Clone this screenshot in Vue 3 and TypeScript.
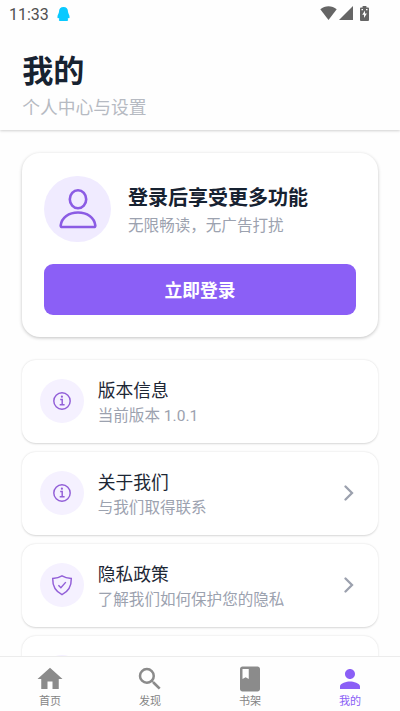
<script setup lang="ts">
interface Entry {
  icon: 'info' | 'shield'
  title: string
  detail: string
  arrow: boolean
}

interface Tab {
  label: string
  path: string
  active: boolean
}

const entries: Entry[] = [
  { icon: 'info', title: '版本信息', detail: '当前版本 1.0.1', arrow: false },
  { icon: 'info', title: '关于我们', detail: '与我们取得联系', arrow: true },
  { icon: 'shield', title: '隐私政策', detail: '了解我们如何保护您的隐私', arrow: true },
  { icon: 'shield', title: '', detail: '', arrow: false },
]

const tabs: Tab[] = [
  { label: '首页', path: 'M10 20v-6h4v6h5v-8h3L12 3 2 12h3v8z', active: false },
  {
    label: '发现',
    path: 'M15.5 14h-.79l-.28-.27A6.47 6.47 0 0 0 16 9.5 6.5 6.5 0 1 0 9.5 16c1.61 0 3.09-.59 4.23-1.57l.27.28v.79l5 4.99L20.49 19zm-6 0a4.5 4.5 0 1 1 0-9 4.5 4.5 0 0 1 0 9',
    active: false,
  },
  {
    label: '书架',
    path: 'M18 2H6c-1.1 0-2 .9-2 2v16c0 1.1.9 2 2 2h12c1.1 0 2-.9 2-2V4c0-1.1-.9-2-2-2M6 4h5v8l-2.5-1.5L6 12z',
    active: false,
  },
  {
    label: '我的',
    path: 'M12 12c2.21 0 4-1.79 4-4s-1.79-4-4-4-4 1.79-4 4 1.79 4 4 4m0 2c-2.67 0-8 1.34-8 4v2h16v-2c0-2.66-5.33-4-8-4',
    active: true,
  },
]
</script>

<template>
  <div class="screen">
    <header class="header">
      <div class="status">
        <span class="clock">11:33</span>
        <svg class="penguin" viewBox="0 0 13 14">
          <path d="M6.500 0C3.600 0 2 2 2 4.800 1.900 6.500.4 7.800.4 10.300c0 1 .7 1.100 1.500.6L2.300 12c-.8.800-.5 2 .7 2h7c1.200 0 1.500-1.200.7-2l.4-1.100c.8.5 1.500.4 1.500-.6C12.600 7.800 11.100 6.500 11 4.800 11 2 9.400 0 6.500 0z" />
        </svg>
        <div class="signals">
          <svg class="wifi" viewBox="0 0 17 14"><path d="M.3 3.2C5-.9 12-.9 16.700 3.200L8.500 14z" /></svg>
          <svg class="cell" viewBox="0 0 14 14"><path d="M14 0v14H0z" /></svg>
          <svg class="battery" viewBox="0 0 9 15">
            <path d="M2.600 0h3.800v1.500H8Q9 1.500 9 2.500V14q0 1-1 1H1q-1 0-1-1V2.500q0-1 1-1h1.600z" />
            <path class="bolt" d="M5 4.500L2.200 8.800h1.800v3.200L6.900 7.600H5zM1.500 3.100h1.500v1.200H1.500zM6 3.100h1.500v1.200H6z" />
          </svg>
        </div>
      </div>
      <h1>我的</h1>
      <p>个人中心与设置</p>
    </header>

    <main class="content">
      <section class="login-card">
        <div class="profile">
          <div class="avatar">
            <svg viewBox="0 0 40 42">
              <ellipse cx="20" cy="11.200" rx="8.200" ry="9" />
              <path d="M4.400 39h31.200q1.700 0 1.700-1.600C36.300 29.600 29.200 24.500 20 24.500S3.700 29.600 2.700 37.400Q2.700 39 4.400 39z" />
            </svg>
          </div>
          <div class="profile-text">
            <h2>登录后享受更多功能</h2>
            <p>无限畅读，无广告打扰</p>
          </div>
        </div>
        <button class="login" type="button">立即登录</button>
      </section>

      <ul class="entries">
        <li v-for="(entry, index) in entries" :key="index" class="entry">
          <div class="entry-icon">
            <svg v-if="entry.icon === 'info'" viewBox="0 0 22 22">
              <circle cx="11" cy="11" r="8.200" />
              <path d="M9.200 9.500h2v5.100M8.700 14.800h4.900" />
              <circle class="dot" cx="10.900" cy="6.700" r="1.100" />
            </svg>
            <svg v-else viewBox="0 0 22 22">
              <path d="M11 1.900C8.500 3.500 5 4.300 1.700 4.500c-.2 8 2.300 12.700 9.300 16.100 7-3.400 9.500-8.100 9.300-16.100C17 4.300 13.500 3.500 11 1.900z" />
              <path d="M7.400 11.300l2.500 2.500 4.900-5.700" />
            </svg>
          </div>
          <div class="entry-text">
            <h3>{{ entry.title }}</h3>
            <p>{{ entry.detail }}</p>
          </div>
          <svg v-if="entry.arrow" class="arrow" viewBox="0 0 10 16"><path d="M1.500 1.500L8 8l-6.500 6.500" /></svg>
        </li>
      </ul>
    </main>

    <nav class="tabs">
      <a v-for="tab in tabs" :key="tab.label" class="tab" :class="{ active: tab.active }">
        <svg viewBox="0 0 24 24"><path :d="tab.path" /></svg>
        <span>{{ tab.label }}</span>
      </a>
    </nav>
  </div>
</template>

<style>
body {
  background: #fefefe;
}
</style>

<style scoped>
.screen {
  display: flex;
  flex-direction: column;
  height: 711px;
  overflow: hidden;
  font-family: Roboto, 'Noto Sans CJK SC', sans-serif;
  background: #fefefe;
}

svg {
  display: block;
  flex: none;
}

h1,
h2,
h3,
p,
ul {
  margin: 0;
  padding: 0;
}

.header {
  flex: none;
  box-sizing: border-box;
  height: 130px;
  background: #fefefe;
  box-shadow: 0 1px 2.500px rgba(0, 0, 0, 0.18);
}

.status {
  display: flex;
  align-items: center;
  height: 28px;
  padding: 0 31px 0 9px;
}

.clock {
  width: 39px;
  padding-top: 1px;
  font-size: 16px;
  font-weight: 400;
  line-height: 28px;
  color: #505050;
}

.penguin {
  width: 13px;
  height: 14px;
  margin-left: 8.500px;
  fill: #09c9ff;
}

.signals {
  display: flex;
  align-items: center;
  margin-left: auto;
  margin-top: -2px;
  fill: #656565;
}

.wifi {
  width: 17px;
  height: 14px;
}

.cell {
  width: 14px;
  height: 14px;
  margin-left: 1.500px;
}

.battery {
  width: 9px;
  height: 15px;
  margin-left: 7.500px;
}

.bolt {
  fill: #fefefe;
}

h1 {
  padding: 22px 22.200px 0;
  font-size: 31.100px;
  font-weight: 700;
  line-height: 43px;
  color: #172231;
}

.header p {
  padding: 2px 22.200px 0;
  font-size: 17.780px;
  line-height: 27px;
  color: #b6bac2;
}

.content {
  flex: 1;
  min-height: 0;
  padding: 23px 22.200px 0;
  overflow: hidden;
}

.login-card {
  box-sizing: border-box;
  height: 184px;
  padding: 22.500px 22.200px;
  border-radius: 18px;
  background: #fff;
  box-shadow: 0 1px 3.500px rgba(0, 0, 0, 0.24);
}

.profile {
  display: flex;
  align-items: center;
}

.avatar {
  display: flex;
  align-items: center;
  justify-content: center;
  width: 66.700px;
  height: 66.700px;
  border-radius: 50%;
  background: #f0ebff;
}

.avatar svg {
  width: 40px;
  height: 42px;
  fill: none;
  stroke: #8b5ce4;
  stroke-width: 2.600;
}

.profile-text {
  margin-left: 17px;
  padding-top: 5px;
}

h2 {
  font-size: 20px;
  font-weight: 700;
  line-height: 29px;
  color: #172231;
}

.profile p {
  margin-top: 1px;
  font-size: 15.560px;
  line-height: 24px;
  color: #9ca2af;
}

.login {
  display: block;
  width: 100%;
  height: 50.500px;
  margin-top: 22.300px;
  padding: 0 0 2px;
  border: 0;
  border-radius: 9px;
  font-family: inherit;
  font-size: 17.780px;
  font-weight: 700;
  color: #fff;
  background: #8b5ff6;
}

.entries {
  display: flex;
  flex-direction: column;
  gap: 9px;
  margin-top: 22.500px;
  list-style: none;
}

.entry {
  display: flex;
  flex: none;
  align-items: center;
  box-sizing: border-box;
  height: 83px;
  padding: 0 24px 0 17.800px;
  border-radius: 14px;
  background: #fff;
  box-shadow: 0 0.800px 2px rgba(0, 0, 0, 0.16);
}

.entry-icon {
  display: flex;
  flex: none;
  align-items: center;
  justify-content: center;
  width: 44.400px;
  height: 44.400px;
  border-radius: 50%;
  background: #f5f1ff;
}

.entry-icon svg {
  width: 22px;
  height: 22px;
  fill: none;
  stroke: #925fd8;
  stroke-width: 1.450;
}

.entry-icon .dot {
  fill: #925fd8;
  stroke: none;
}

.entry-text {
  margin-left: 13.400px;
  padding-top: 3px;
}

h3 {
  font-size: 17.780px;
  font-weight: 400;
  line-height: 26px;
  color: #1d2735;
}

.entry p {
  font-size: 15.560px;
  line-height: 24px;
  color: #9ca2af;
}

.arrow {
  width: 10px;
  height: 16px;
  margin-left: auto;
  fill: none;
  stroke: #9ca1ae;
  stroke-width: 2.300;
  stroke-linecap: round;
}

.tabs {
  display: grid;
  flex: none;
  grid-template-columns: repeat(4, 1fr);
  box-sizing: border-box;
  height: 55px;
  border-top: 1px solid #ececec;
  background: #fefefe;
}

.tab {
  display: flex;
  flex-direction: column;
  align-items: center;
  padding-top: 7px;
  color: #858585;
}

.tab svg {
  width: 30px;
  height: 30px;
  fill: #8b8b8b;
}

.tab span {
  font-size: 11.100px;
  line-height: 16px;
}

.tab.active {
  color: #8b5ff6;
}

.tab.active svg {
  fill: #8b5ff6;
}
</style>
